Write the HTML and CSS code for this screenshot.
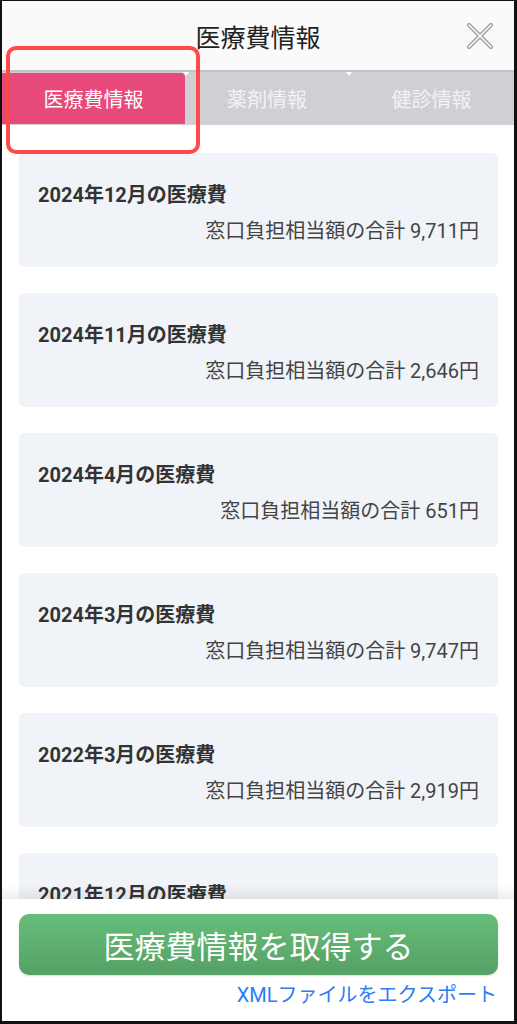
FILE: index.html
```html
<!DOCTYPE html>
<html lang="ja">
<head>
    <meta charset="UTF-8">
    <meta name="viewport" content="width=device-width, initial-scale=1.0">
    <title>医療費情報</title>
    <link rel="stylesheet" href="styles.css">
</head>
<body>

<div class="screen">
    <header class="top-bar">
        <h1>医療費情報</h1>
        <button class="close-btn" aria-label="閉じる">
            <svg width="26" height="26" viewBox="0 0 26 26">
                <path d="M2 2 L24 24 M24 2 L2 24" stroke="#9a9a9a" stroke-width="4" stroke-linecap="round"/>
                <path d="M2 2 L24 24 M24 2 L2 24" stroke="#ffffff" stroke-width="1.6" stroke-linecap="round"/>
            </svg>
        </button>
    </header>

    <!-- Tabs -->
    <nav class="tabs">
        <div class="tab active">医療費情報</div>
        <div class="tab">薬剤情報</div>
        <div class="tab">健診情報</div>
    </nav>
    <div class="highlight"></div>

    <!-- Monthly list -->
    <main class="list">
        <div class="card">
            <h2>2024年12月の医療費</h2>
            <p>窓口負担相当額の合計 9,711円</p>
        </div>
        <div class="card">
            <h2>2024年11月の医療費</h2>
            <p>窓口負担相当額の合計 2,646円</p>
        </div>
        <div class="card">
            <h2>2024年4月の医療費</h2>
            <p>窓口負担相当額の合計 651円</p>
        </div>
        <div class="card">
            <h2>2024年3月の医療費</h2>
            <p>窓口負担相当額の合計 9,747円</p>
        </div>
        <div class="card">
            <h2>2022年3月の医療費</h2>
            <p>窓口負担相当額の合計 2,919円</p>
        </div>
        <div class="card">
            <h2>2021年12月の医療費</h2>
            <p>窓口負担相当額の合計 4,380円</p>
        </div>
    </main>

    <footer class="bottom">
        <button class="fetch-btn">医療費情報を取得する</button>
        <a class="export-link" href="#">XMLファイルをエクスポート</a>
    </footer>
</div>

</body>
</html>
```

FILE: styles.css
```css
* {
    box-sizing: border-box;
}

body {
    margin: 0;
    padding: 0;
    background-color: #000;
    font-family: Roboto, "Noto Sans CJK JP", sans-serif;
    color: #333;
}

.screen {
    position: relative;
    height: 1024px;
    display: flex;
    flex-direction: column;
    overflow: hidden;
    background-color: #fff;
    border-style: solid;
    border-color: #111;
    border-width: 1px 3px 3px 2px;
}

.top-bar {
    position: relative;
    height: 69px;
    flex-shrink: 0;
    display: flex;
    align-items: center;
    justify-content: center;
    background-color: #fafafa;
}

.top-bar h1 {
    margin: 0;
    font-size: 25px;
    font-weight: 400;
    color: #222;
    font-family: "Noto Sans CJK JP", sans-serif;
}

.close-btn {
    position: absolute;
    right: 21px;
    top: 22px;
    padding: 0;
    border: none;
    background: none;
    line-height: 0;
}

.tabs {
    height: 55px;
    flex-shrink: 0;
    display: grid;
    grid-template-columns: 183px 164px 1fr;
    background-color: #d0cfd4;
    border-top: 2px solid #c2c1c6;
}

.tab {
    position: relative;
    display: flex;
    align-items: center;
    justify-content: center;
    font-size: 20px;
    color: #f2f2f4;
    font-family: "Noto Sans CJK JP", sans-serif;
}

.tab.active {
    margin-top: 1px;
    margin-bottom: 1px;
    background-color: #e8497b;
    border-top-right-radius: 4px;
    color: #fff;
}

.tab.active::after,
.tab:nth-child(2)::after {
    content: "";
    position: absolute;
    top: -1px;
    right: -4px;
    border-left: 3px solid transparent;
    border-right: 3px solid transparent;
    border-top: 4px solid #fff;
}

.tab:nth-child(2)::after {
    top: 0;
    right: -3px;
}

.highlight {
    position: absolute;
    left: 4px;
    top: 45px;
    width: 194px;
    height: 108px;
    border: 4px solid #ff4a4a;
    border-radius: 10px;
}

.list {
    flex: 1;
    overflow: hidden;
    padding: 28px 16px 0 17px;
}

.card {
    height: 114px;
    margin-bottom: 26px;
    padding: 29px 19px 0 19px;
    background-color: #f0f3f8;
    border-radius: 5px;
}

.card h2 {
    margin: 0;
    font-size: 20px;
    font-weight: 700;
    color: #333;
    line-height: 26px;
}

.card p {
    margin: 10px 0 0;
    font-size: 20px;
    color: #444;
    text-align: right;
    line-height: 26px;
}

.bottom {
    position: relative;
    flex-shrink: 0;
    height: 122px;
    padding: 15px 16px 0 17px;
    background-color: #fff;
    display: flex;
    flex-direction: column;
}

.bottom::before {
    content: "";
    position: absolute;
    left: 0;
    right: 0;
    top: -14px;
    height: 14px;
    background: linear-gradient(rgba(0, 0, 0, 0), rgba(0, 0, 0, 0.07));
}

.fetch-btn {
    height: 61px;
    border: none;
    border-radius: 10px;
    background: linear-gradient(#67be7a, #55a065);
    box-shadow: 0 1px 2px rgba(0, 0, 0, 0.15);
    color: #fff;
    font-size: 31px;
    font-family: "Noto Sans CJK JP", sans-serif;
}

.export-link {
    margin-top: 4px;
    align-self: flex-end;
    font-size: 20px;
    color: #2d7df5;
    text-decoration: none;
    margin-right: 1px;
}
```
